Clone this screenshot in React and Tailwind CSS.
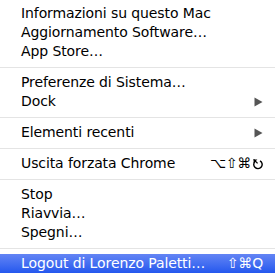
import React from "react";

function Esc() {
  return (
    <svg width="11" height="12" viewBox="0 0 11 12" className="inline-block">
      <path d="M3.6 3 A4.2 4.2 0 1 0 8 2.8" fill="none" stroke="currentColor" strokeWidth="1.4" />
      <path d="M1.6 1.4 L5.4 1.4 L1.6 5.2 Z" fill="currentColor" />
      <path d="M1.6 1.4 L5.6 5.4" stroke="currentColor" strokeWidth="1.3" />
    </svg>
  );
}

function Arrow() {
  return (
    <svg width="9" height="10" viewBox="0 0 9 10">
      <path d="M0.5 0.5 L8.5 5 L0.5 9.5 Z" fill="#555" />
    </svg>
  );
}

function Item({ label, right, active }) {
  return (
    <div
      className={
        "h-[19px] flex items-center justify-between pl-[21px] pr-[12px] " +
        (active ? "bg-gradient-to-b from-[#6384f4] to-[#2457ee] text-white" : "text-black")
      }
    >
      <span className="leading-[19px] tracking-[-0.1px]">{label}</span>
      {right}
    </div>
  );
}

function Sep() {
  return (
    <div className="h-[12px] flex items-center">
      <div className="h-px w-full bg-[#e4e4e4]" />
    </div>
  );
}

export default function App() {
  return (
    <div
      className="w-[275px] h-[277px] bg-white py-[4px] text-[14px] overflow-hidden"
      style={{ fontFamily: '"DejaVu Sans", sans-serif' }}
    >
      <Item label="Informazioni su questo Mac" />
      <Item label="Aggiornamento Software…" />
      <Item label="App Store…" />
      <Sep />
      <Item label="Preferenze di Sistema…" />
      <Item label="Dock" right={<Arrow />} />
      <Sep />
      <Item label="Elementi recenti" right={<Arrow />} />
      <Sep />
      <Item
        label="Uscita forzata Chrome"
        right={
          <span className="flex items-center gap-[1px] text-[14px]">
            <span className="tracking-[-0.3px]">⌥⇧⌘</span>
            <Esc />
          </span>
        }
      />
      <Sep />
      <Item label="Stop" />
      <Item label="Riavvia…" />
      <Item label="Spegni…" />
      <Sep />
      <Item
        label="Logout di Lorenzo Paletti…"
        active
        right={<span className="tracking-[-0.2px]">⇧⌘Q</span>}
      />
    </div>
  );
}
